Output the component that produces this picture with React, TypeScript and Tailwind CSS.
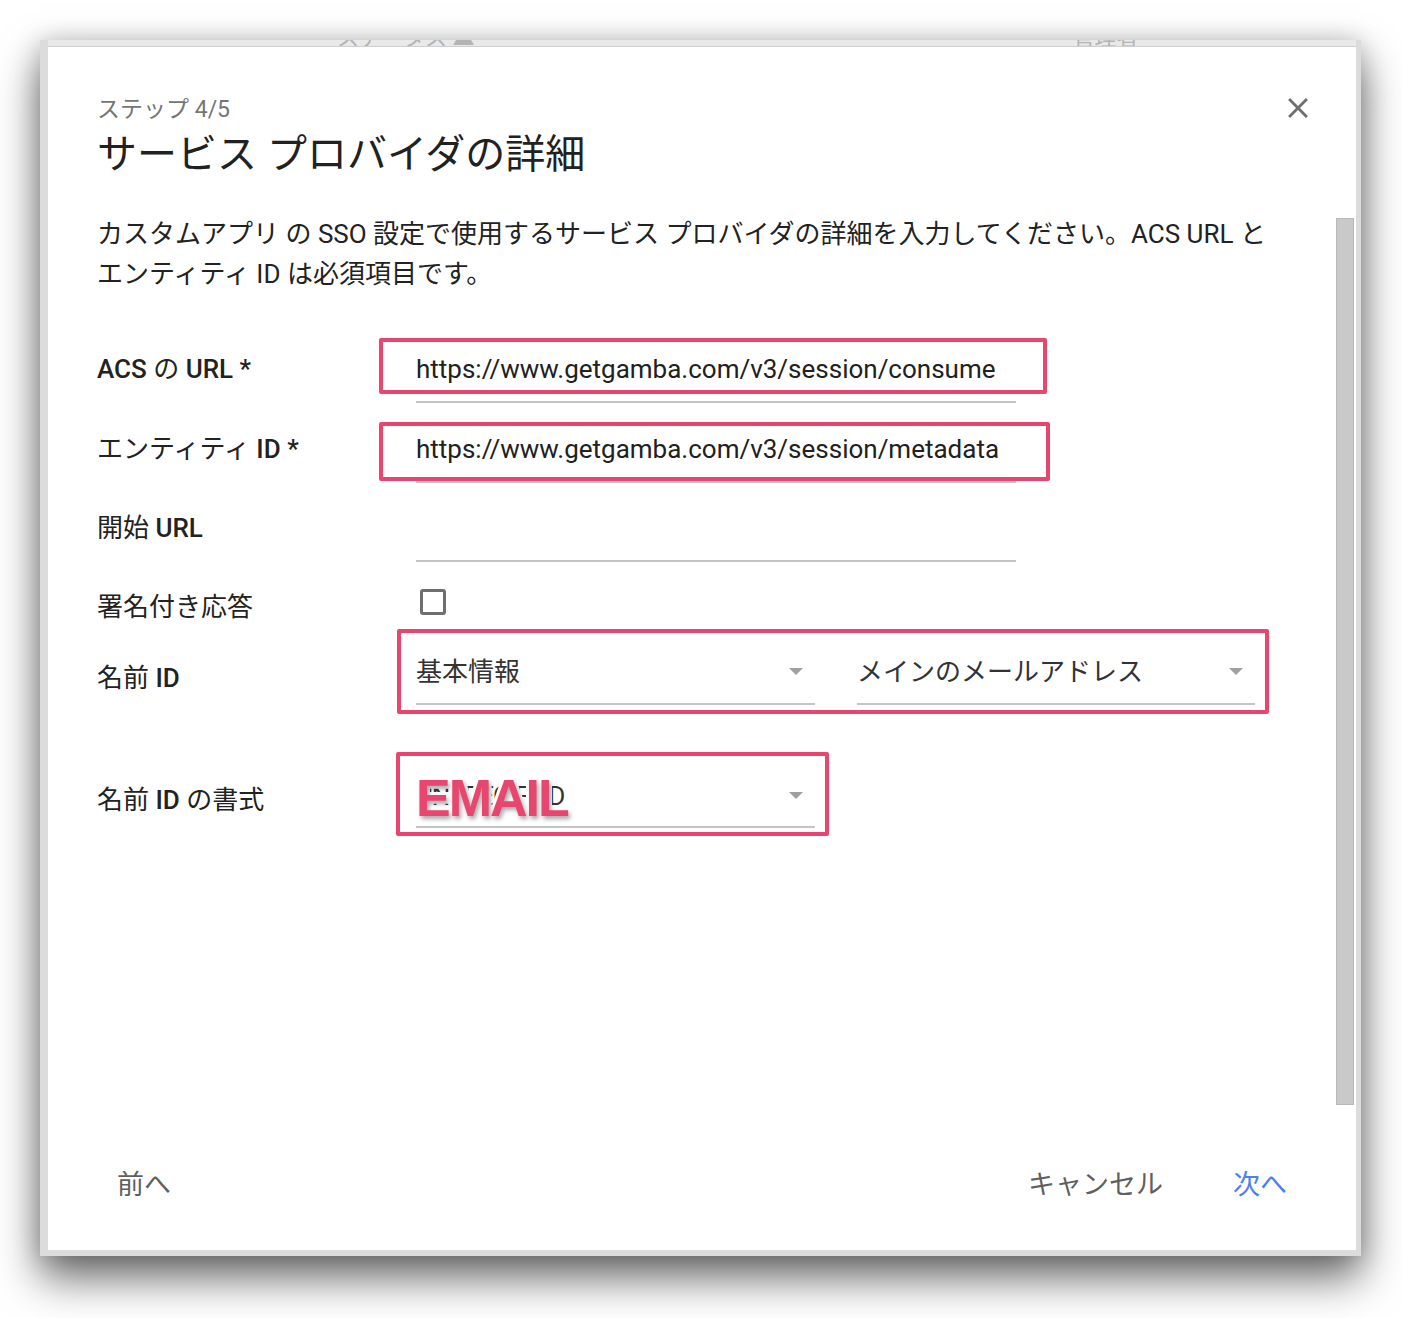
import type { ReactNode } from 'react';

const FRAME_SHADOW =
  'shadow-[0_22px_40px_rgba(0,0,0,0.58),0_0_24px_rgba(0,0,0,0.18)]';

// Small grey triangle used by the dropdowns
function Caret() {
  return (
    <svg width="14" height="8" viewBox="0 0 14 8" className="shrink-0">
      <path d="M0 0h14L7 7z" fill="#a0a0a0" />
    </svg>
  );
}

function CloseIcon() {
  return (
    <svg viewBox="0 0 24 24" className="h-[34px] w-[34px] shrink-0" fill="#6f6f6f">
      <path d="M19 6.41 17.59 5 12 10.59 6.41 5 5 6.41 10.59 12 5 17.59 6.41 19 12 13.41 17.59 19 19 17.59 13.41 12z" />
    </svg>
  );
}

// Pink outline drawn over a form field
function Highlight({ className }: { className: string }) {
  return (
    <div
      className={`pointer-events-none absolute rounded-[2px] border-[4px] border-[#e8466e] ${className}`}
    />
  );
}

function Label({ children, pt }: { children: ReactNode; pt: string }) {
  return (
    <div className={`w-[319px] shrink-0 text-[26px] leading-[36px] text-[#222] ${pt}`}>
      {children}
    </div>
  );
}

function Select({ value, width, pt, pb, textClass = '' }: { value: string; width: string; pt: string; pb: string; textClass?: string }) {
  return (
    <div
      className={`flex items-center justify-between border-b-2 border-[#c4c4c4] pr-[12px] ${width} ${pt} ${pb}`}
    >
      <span className={`text-[26px] leading-[36px] text-[#333] ${textClass}`}>{value}</span>
      <Caret />
    </div>
  );
}

export default function App() {
  return (
    <div className="min-h-[1318px] w-[1402px] bg-white pl-[40px] pt-[40px] font-[Roboto,'Noto_Sans_CJK_JP',sans-serif]">
      <div
        className={`flex h-[1216px] w-[1321px] flex-col bg-[#dcdcdc] pb-[6px] pl-[8px] pr-[5px] ${FRAME_SHADOW}`}
      >
        {/* page behind the dialog peeking through the top edge */}
        <div className="flex h-[7px] items-end overflow-hidden border-b border-[#cfcfcf] bg-[#e9e9e9] pl-[289px] text-[22px] leading-[16px] text-[#b4b4b4]">
          <span>ステータス ▲</span>
          <span className="ml-[598px]">管理者</span>
        </div>

        <div className="flex flex-1 bg-white">
          <div className="flex flex-1 flex-col pl-[49px] pr-[21px] pt-[44px]">
            {/* header */}
            <div className="flex items-start justify-between">
              <div className="pt-[4px]">
                <div className="text-[23px] leading-[30px] text-[#757575]">ステップ 4/5</div>
                <h1 className="mt-[6px] text-[40px] leading-[48px] font-normal text-[#212121]">
                  サービス プロバイダの詳細
                </h1>
              </div>
              <CloseIcon />
            </div>

            <p className="mt-[35px] text-[26px] leading-[40px] text-[#222]">
              カスタムアプリ の SSO 設定で使用するサービス プロバイダの詳細を入力してください。ACS URL と
              <br />
              エンティティ ID は必須項目です。
            </p>

            {/* form */}
            <div className="mt-[36px] flex flex-col">
              <div className="relative flex h-[80px]">
                <Label pt="pt-[21px]">
                  <span className="font-medium">ACS</span> の <span className="font-medium">URL *</span>
                </Label>
                <div className="w-[600px] self-start border-b-2 border-[#c4c4c4] pb-[14px] pt-[21px] text-[26px] leading-[36px] text-[#212121]">
                  https://www.getgamba.com/v3/session/consume
                </div>
                <Highlight className="left-[282px] top-[8px] h-[56px] w-[668px]" />
              </div>

              <div className="relative flex h-[80px]">
                <Label pt="pt-[21px]">
                  エンティティ <span className="font-medium">ID *</span>
                </Label>
                <div className="w-[600px] self-start border-b-2 border-[#c4c4c4] pb-[14px] pt-[21px] text-[26px] leading-[36px] text-[#212121]">
                  https://www.getgamba.com/v3/session/metadata
                </div>
                <Highlight className="left-[282px] top-[12px] h-[59px] w-[671px]" />
              </div>

              <div className="relative flex h-[80px]">
                <Label pt="pt-[20px]">
                  開始 <span className="font-medium">URL</span>
                </Label>
                <div className="h-[72px] w-[600px] self-start border-b-2 border-[#c4c4c4]" />
              </div>

              <div className="relative flex h-[70px]">
                <Label pt="pt-[19px]">署名付き応答</Label>
                <div className="pl-[4px] pt-[19px]">
                  <div className="h-[26px] w-[26px] rounded-[3px] border-[3px] border-[#6f6f6f]" />
                </div>
              </div>

              <div className="relative flex h-[100px]">
                <Label pt="pt-[20px]">
                  名前 <span className="font-medium">ID</span>
                </Label>
                <div className="flex gap-[42px] self-start">
                  <Select value="基本情報" width="w-[399px]" pt="pt-[14px]" pb="pb-[13px]" />
                  <Select value="メインのメールアドレス" width="w-[398px]" pt="pt-[14px]" pb="pb-[13px]" />
                </div>
                <Highlight className="left-[300px] top-[-11px] h-[85px] w-[872px]" />
              </div>

              <div className="relative flex h-[110px]">
                <Label pt="pt-[42px]">
                  名前 <span className="font-medium">ID</span> の書式
                </Label>
                <div className="self-start">
                  <Select
                    value="UNSPECIFIED"
                    width="w-[399px]"
                    pt="pt-[38px]"
                    pb="pb-[12px]"
                    textClass="tracking-[-1px]"
                  />
                </div>
                <Highlight className="left-[299px] top-[12px] h-[84px] w-[433px]" />
                <span className="pointer-events-none absolute left-[319px] top-[32px] font-['Liberation_Sans',Arial,sans-serif] text-[52px] leading-[52px] font-bold tracking-[-2px] text-[#e8466e] [-webkit-text-stroke:6px_#fff] [paint-order:stroke_fill] [text-shadow:2px_3px_4px_rgba(0,0,0,0.35)]">
                  EMAIL
                </span>
              </div>
            </div>

            {/* footer actions */}
            <div className="mr-[8px] mt-auto flex items-center justify-between pb-[47px] text-[27px] leading-[36px]">
              <button className="px-[20px] text-[#5f5f5f]">前へ</button>
              <div className="flex gap-[30px]">
                <button className="px-[20px] text-[#5f5f5f]">キャンセル</button>
                <button className="px-[20px] text-[#4a80f0]">次へ</button>
              </div>
            </div>
          </div>

          {/* scrollbar */}
          <div className="w-[20px] shrink-0 pr-[2px] pt-[171px]">
            <div className="h-[887px] w-[18px] border border-[#b8b8b8] bg-[#c9c9c9]" />
          </div>
        </div>
      </div>
    </div>
  );
}
